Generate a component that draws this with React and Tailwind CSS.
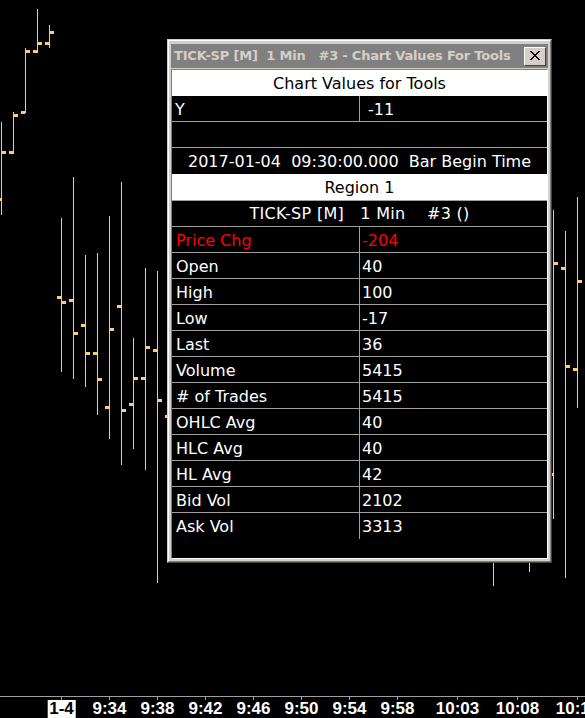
import React from 'react';

// price bars: x position, high/low (y px), open/close tick (y px)
const bars = [
  { x: 1, hi: 122, lo: 215, open: 199, close: 152 },
  { x: 13, hi: 112, lo: 154, open: 152, close: 115 },
  { x: 25, hi: 48, lo: 113, open: 112, close: 51 },
  { x: 37, hi: 9, lo: 53, open: 51, close: 43 },
  { x: 49, hi: 25, lo: 48, open: 43, close: 32 },
  { x: 61, hi: 218, lo: 372, open: 297, close: 302 },
  { x: 73, hi: 177, lo: 379, open: 300, close: 333 },
  { x: 85, hi: 255, lo: 387, open: 325, close: 353 },
  { x: 97, hi: 253, lo: 415, open: 353, close: 379 },
  { x: 109, hi: 216, lo: 439, open: 407, close: 329 },
  { x: 121, hi: 182, lo: 465, open: 306, close: 410 },
  { x: 133, hi: 338, lo: 449, open: 404, close: 378 },
  { x: 145, hi: 268, lo: 470, open: 378, close: 347 },
  { x: 157, hi: 271, lo: 583, open: 350, close: 400 },
  { x: 169, hi: 300, lo: 500, open: 416, close: 380 },
  { x: 493, hi: 400, lo: 586, open: 450, close: 480 },
  { x: 529, hi: 350, lo: 572, open: 420, close: 440 },
  { x: 553, hi: 210, lo: 519, open: 474, close: 263 },
  { x: 565, hi: 231, lo: 578, open: 268, close: 366 },
  { x: 577, hi: 197, lo: 408, open: 369, close: 281 },
];

const timeLabels = [
  { x: 61, label: '1-4', date: true },
  { x: 109, label: '9:34' },
  { x: 157, label: '9:38' },
  { x: 205, label: '9:42' },
  { x: 253, label: '9:46' },
  { x: 301, label: '9:50' },
  { x: 349, label: '9:54' },
  { x: 397, label: '9:58' },
  { x: 457, label: '10:03' },
  { x: 517, label: '10:08' },
  { x: 577, label: '10:13' },
];

const rows = [
  { name: 'Price Chg', value: '-204', red: true },
  { name: 'Open', value: '40' },
  { name: 'High', value: '100' },
  { name: 'Low', value: '-17' },
  { name: 'Last', value: '36' },
  { name: 'Volume', value: '5415' },
  { name: '# of Trades', value: '5415' },
  { name: 'OHLC Avg', value: '40' },
  { name: 'HLC Avg', value: '40' },
  { name: 'HL Avg', value: '42' },
  { name: 'Bid Vol', value: '2102' },
  { name: 'Ask Vol', value: '3313' },
];

function PriceBars() {
  return (
    <svg width="585" height="696" viewBox="0 0 585 696" shapeRendering="crispEdges" className="absolute left-0 top-0">
      {bars.map((b) => (
        <g key={b.x} fill="#fdca80">
          <rect x={b.x} y={b.hi} width="1" height={b.lo - b.hi} />
          <rect x={b.x - 4} y={b.open - 1} width="4" height="3" />
          <rect x={b.x + 1} y={b.close - 1} width="4" height="3" />
        </g>
      ))}
    </svg>
  );
}

function ToolWindow() {
  return (
    <div className="absolute left-[167px] top-[39px] w-[385px] h-[524px] border border-t-[#d4d0c8] border-l-[#d4d0c8] border-b-[#404040] border-r-[#404040] bg-[#d4d0c8]">
      <div className="h-full flex flex-col border border-t-white border-l-white border-b-[#808080] border-r-[#808080] pt-[3px] px-[2px] pb-[2px]">
        <div className="h-[24px] shrink-0 bg-[#808080] flex items-center justify-between pl-[3px] pr-[2px]">
          <span className="text-[13px] leading-[24px] font-bold text-[#d4d0c8] whitespace-pre font-['DejaVu_Sans',sans-serif] tracking-[-0.2px]">
            {'TICK-SP [M]  1 Min   #3 - Chart Values For Tools'}
          </span>
          <div className="w-[22px] h-[19px] bg-[#d4d0c8] border border-t-white border-l-white border-b-[#404040] border-r-[#404040] flex items-center justify-center">
            <svg width="12" height="10" viewBox="0 0 12 10" shapeRendering="crispEdges">
              <path d="M1 0 L10 9 M2 0 L11 9 M10 0 L1 9 M11 0 L2 9" stroke="#000" strokeWidth="1.2" fill="none" />
            </svg>
          </div>
        </div>
        <div className="mt-[1px] flex-1 bg-black border border-t-[#808080] border-l-[#808080] border-b-white border-r-white font-['DejaVu_Sans',sans-serif] text-[16px] leading-[27px] text-white">
          <div className="h-[26px] bg-white text-black text-center">Chart Values for Tools</div>
          <div className="h-[26px] flex border-b border-[#a0a0a0]">
            <div className="w-[188px] border-r border-[#a0a0a0] pl-[3px]">Y</div>
            <div className="pl-[8px]">-11</div>
          </div>
          <div className="h-[26px] border-b border-[#a0a0a0]" />
          <div className="h-[26px] text-center whitespace-pre">{'2017-01-04  09:30:00.000  Bar Begin Time'}</div>
          <div className="h-[26px] bg-white text-black text-center">Region 1</div>
          <div className="h-[27px] border-t border-b border-[#a0a0a0] text-center whitespace-pre leading-[26px] tracking-[0.3px]">
            {'TICK-SP [M]   1 Min    #3 ()'}
          </div>
          {rows.map((r, i) => (
            <div
              key={r.name}
              className={
                i === rows.length - 1
                  ? 'h-[26px] flex'
                  : 'h-[26px] flex border-b border-[#a0a0a0]'
              }
            >
              <div className={r.red ? 'w-[188px] border-r border-[#a0a0a0] pl-[4px] text-[#ff0000]' : 'w-[188px] border-r border-[#a0a0a0] pl-[4px]'}>
                {r.name}
              </div>
              <div className={r.red ? 'pl-[2px] text-[#ff0000]' : 'pl-[2px]'}>{r.value}</div>
            </div>
          ))}
        </div>
      </div>
    </div>
  );
}

function TimeScale() {
  return (
    <div className="relative h-[22px] shrink-0 border-t border-[#a0a0a0] font-['Liberation_Sans',Arial,sans-serif] font-bold text-[17px] leading-[18px]">
      {timeLabels.map((t) => (
        <React.Fragment key={t.label}>
          <div className="absolute top-0 w-[1px] h-[3px] bg-[#a0a0a0]" style={{ left: t.x }} />
          <span
            className={
              t.date
                ? 'absolute top-[3px] -translate-x-1/2 px-[2px] bg-white text-black h-[19px] whitespace-nowrap'
                : 'absolute top-[3px] -translate-x-1/2 px-[2px] text-white whitespace-nowrap'
            }
            style={{ left: t.x + 0.5 }}
          >
            {t.label}
          </span>
        </React.Fragment>
      ))}
    </div>
  );
}

export default function App() {
  return (
    <div className="w-[585px] h-[718px] bg-black flex flex-col overflow-hidden">
      <div className="relative flex-1">
        <PriceBars />
        <ToolWindow />
      </div>
      <TimeScale />
    </div>
  );
}
